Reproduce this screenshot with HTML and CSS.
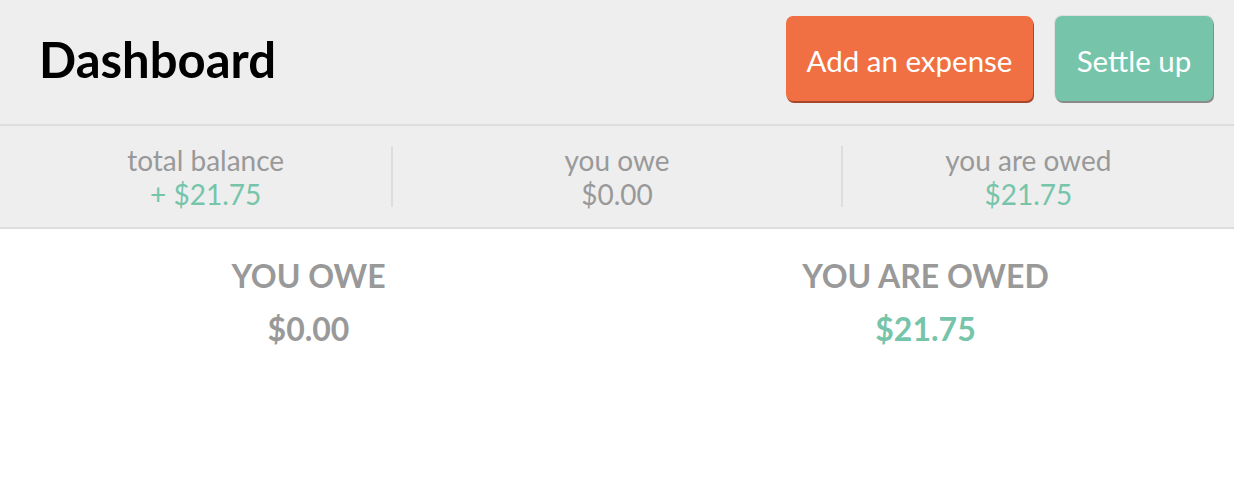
FILE: index.html
```html
<!DOCTYPE html>
<html lang="en">
<head>
<meta charset="utf-8">
<title>Dashboard</title>
<link rel="stylesheet" href="styles.css">
</head>
<body>
<div class="dashboard">
  <header class="topbar">
    <h1 class="title">Dashboard</h1>
    <div class="actions">
      <button class="btn btn-orange">Add an expense</button>
      <button class="btn btn-teal">Settle up</button>
    </div>
  </header>
  <section class="summary">
    <div class="block">
      <div class="label">total balance</div>
      <div class="amount positive">+ $21.75</div>
    </div>
    <div class="block block-mid">
      <div class="label">you owe</div>
      <div class="amount">$0.00</div>
    </div>
    <div class="block">
      <div class="label">you are owed</div>
      <div class="amount positive">$21.75</div>
    </div>
  </section>
  <section class="balances">
    <div class="col">
      <h2 class="col-title">YOU OWE</h2>
      <div class="col-amount">$0.00</div>
    </div>
    <div class="col">
      <h2 class="col-title">YOU ARE OWED</h2>
      <div class="col-amount positive">$21.75</div>
    </div>
  </section>
</div>
</body>
</html>
```

FILE: styles.css
```css
* { box-sizing: border-box; }
html, body {
  margin: 0;
  padding: 0;
  background: #fff;
  font-family: Lato, "Open Sans", "Liberation Sans", sans-serif;
}
.topbar {
  display: flex;
  align-items: center;
  justify-content: space-between;
  height: 126px;
  padding: 0 21px 0 39px;
  background: #eeeeee;
  border-bottom: 2px solid #dddddd;
}
.title {
  margin: 0 0 5px;
  font-size: 49px;
  font-weight: 700;
  color: #000;
  line-height: 1;
}
.actions {
  display: flex;
  gap: 22px;
  align-items: center;
  padding-bottom: 7px;
}
.btn {
  font-family: inherit;
  font-size: 29.5px;
  color: #fff;
  border: none;
  border-radius: 7px;
  height: 85px;
  padding: 4px 0 0;
  white-space: nowrap;
  text-align: center;
  cursor: pointer;
}
.btn-orange {
  background: #f07043;
  width: 247px;
  box-shadow: 1px 2px 0 #a8482a;
}
.btn-teal {
  background: #76c4a9;
  width: 158px;
  box-shadow: 1px 2px 0 #8a8a8a, 0 0 0 1px #dedede;
}
.summary {
  display: grid;
  grid-template-columns: 1fr 1fr 1fr;
  align-items: center;
  height: 103px;
  background: #eeeeee;
  border-bottom: 2px solid #dddddd;
}
.block {
  text-align: center;
  font-size: 28px;
  line-height: 34px;
  color: #999999;
}
.block-mid {
  margin: 0 -20px;
  height: 61px;
  display: flex;
  flex-direction: column;
  justify-content: center;
  border-left: 2px solid #dddddd;
  border-right: 2px solid #dddddd;
}
.positive { color: #76c4a9; }
.balances {
  display: grid;
  grid-template-columns: 1fr 1fr;
  padding-top: 27px;
}
.col {
  text-align: center;
}
.col-title {
  margin: 0;
  font-size: 32px;
  font-weight: 700;
  color: #999999;
  line-height: 40px;
}
.col-amount {
  margin-top: 13px;
  font-size: 32px;
  font-weight: 700;
  color: #999999;
  line-height: 40px;
}
.col-amount.positive { color: #76c4a9; }
```
